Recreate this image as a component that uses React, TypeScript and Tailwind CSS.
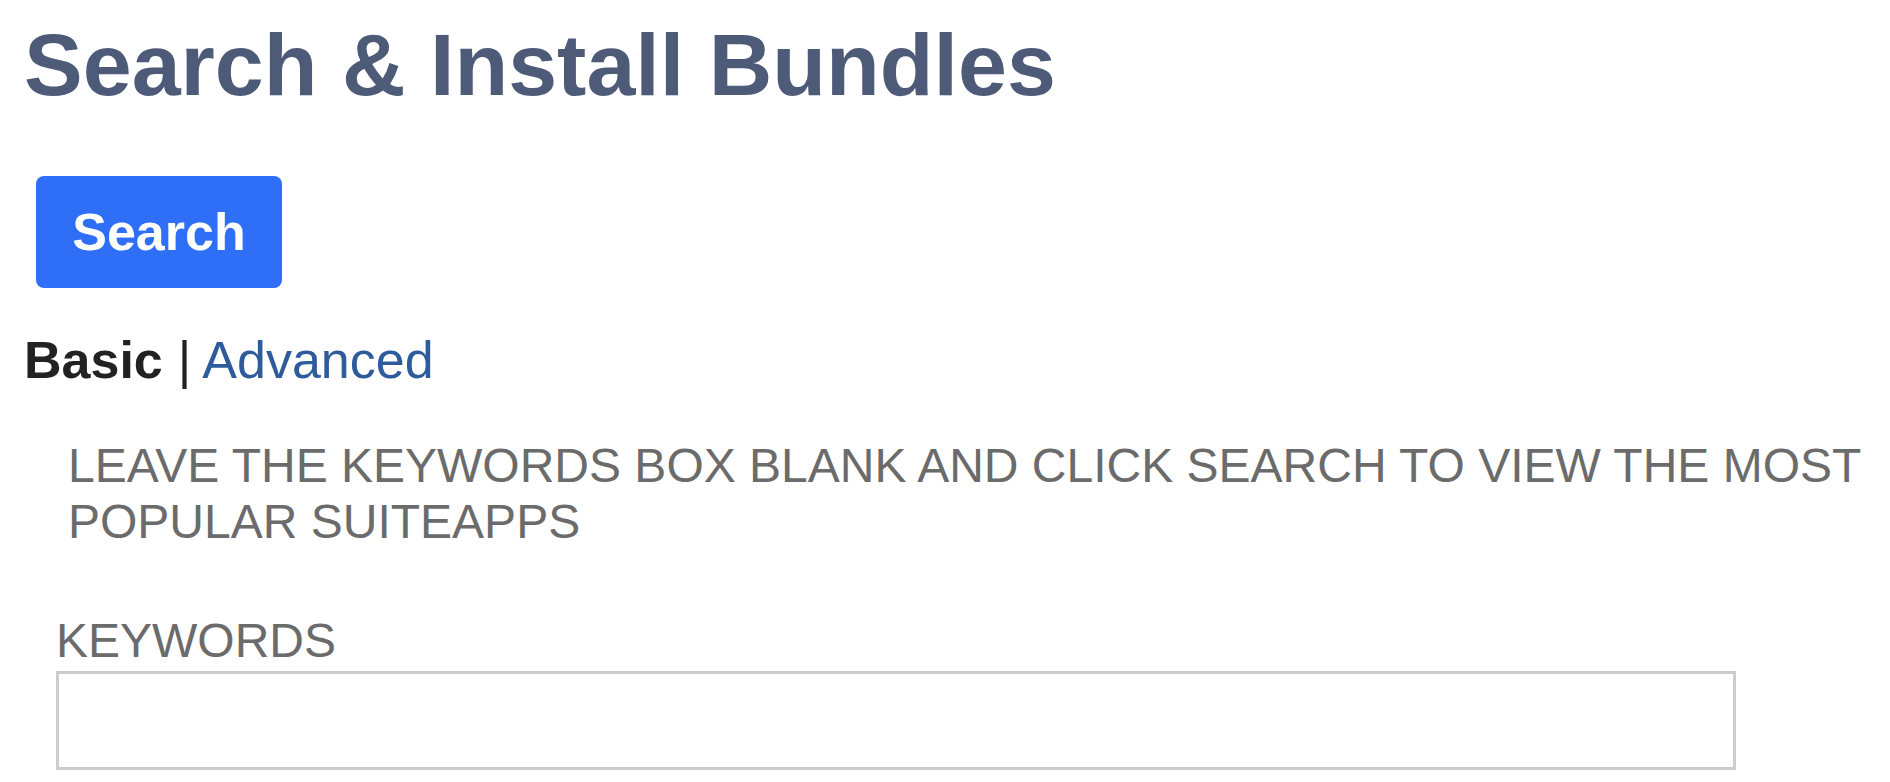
export default function App() {
  return (
    <div className="min-h-screen bg-white pl-[24px] font-['Liberation_Sans',Arial,sans-serif]">
      <h1 className="pt-[21px] text-[88px] font-bold leading-none text-[#4d5b78]">
        Search &amp; Install Bundles
      </h1>

      <button
        type="button"
        className="mt-[67px] ml-[12px] flex h-[112px] w-[246px] items-center justify-center rounded-[8px] bg-[#2f6ef6] text-[52px] font-bold leading-none text-white"
      >
        Search
      </button>

      <div className="mt-[46px] flex items-baseline text-[52px] leading-none">
        <span className="font-bold text-[#222222]">Basic</span>
        <span className="ml-[15px] mr-[11px] text-[#222222]">|</span>
        <a href="#" className="text-[#2d5b9c]">
          Advanced
        </a>
      </div>

      <p className="mt-[52px] ml-[44px] text-[48px] leading-[56px] text-[#6b6b6b]">
        LEAVE THE KEYWORDS BOX BLANK AND CLICK SEARCH TO VIEW THE MOST POPULAR SUITEAPPS
      </p>

      <div className="mt-[67px] ml-[32px]">
        <label className="block text-[48px] leading-none text-[#6b6b6b]">KEYWORDS</label>
        <input
          type="text"
          className="mt-[6px] block h-[99px] w-[1680px] border-[3px] border-[#cccccc] bg-white px-3 text-[40px] outline-none"
        />
      </div>
    </div>
  );
}
